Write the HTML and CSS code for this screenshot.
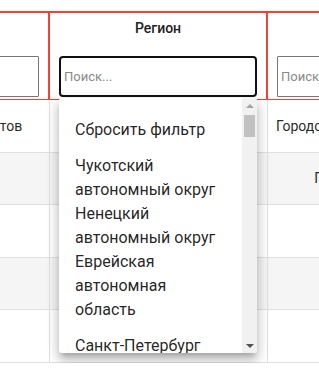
FILE: index.html
```html
<!DOCTYPE html>
<html lang="ru">
 <head>
    <meta charset="utf-8">
    <title>Регионы</title>
    <link rel="stylesheet" href="styles.css">
 </head>
 <body>
    <table class="grid">
        <thead>
            <tr>
                <th class="col-left">
                    <div class="head-title">Код</div>
                    <input class="search" type="text" placeholder="Поиск...">
                </th>
                <th class="col-mid">
                    <div class="head-title">Регион</div>
                    <div class="search-wrap">
                        <input class="search search-active" type="text" placeholder="Поиск...">

                        <!-- выпадающий список -->
                        <div class="menu">
                            <ul class="menu-list">
                                <li class="menu-item">Сбросить фильтр</li>
                                <li class="menu-item">Чукотский автономный округ</li>
                                <li class="menu-item">Ненецкий автономный округ</li>
                                <li class="menu-item">Еврейская автономная область</li>
                                <li class="menu-item">Санкт-Петербург</li>
                            </ul>
                            <div class="scrollbar">
                                <div class="sb-btn"><span class="arrow-up"></span></div>
                                <div class="sb-thumb"></div>
                                <div class="sb-track"></div>
                                <div class="sb-btn"><span class="arrow-down"></span></div>
                            </div>
                        </div>
                    </div>
                </th>
                <th class="col-right">
                    <div class="head-title">Тип</div>
                    <input class="search" type="text" placeholder="Поиск...">
                </th>
            </tr>
        </thead>
        <tbody>
            <tr>
                <td>Число объектов</td>
                <td></td>
                <td>Городской округ с внутригородским делением</td>
            </tr>
            <tr>
                <td>12</td>
                <td></td>
                <td>Город федерального значения РФ</td>
            </tr>
            <tr>
                <td>7</td>
                <td></td>
                <td></td>
            </tr>
            <tr>
                <td>3</td>
                <td></td>
                <td></td>
            </tr>
            <tr>
                <td>5</td>
                <td></td>
                <td></td>
            </tr>
        </tbody>
    </table>
 </body>
</html>
```

FILE: styles.css
```css
html, body {
    margin: 0;
    padding: 0;
    overflow: hidden;
    background: white;
}

body {
    font-family: Roboto, "Noto Sans", sans-serif;
    color: rgba(0, 0, 0, 0.87);
}

.grid {
    table-layout: fixed;
    border-collapse: separate;
    border-spacing: 0;
    width: 687px;
    margin-top: 11px;
    margin-left: -101px;
}

.col-left {
    width: 151px;
}

.col-mid {
    width: 218px;
}

.col-right {
    width: 318px;
}

/* шапка */

.grid th {
    box-sizing: border-box;
    vertical-align: top;
    padding: 5px 9px 2px 9px;
    border-top: 2px solid #f44336;
    border-right: 2px solid #f44336;
    border-bottom: 1px solid #f44336;
    font-weight: normal;
}

.head-title {
    height: 20px;
    line-height: 20px;
    margin-bottom: 18px;
    font-size: 14px;
    font-weight: 500;
    text-align: center;
    color: #212121;
}

.search {
    display: block;
    box-sizing: border-box;
    width: 100%;
    height: 41px;
    margin: 0;
    padding: 0 3px;
    border: 1px solid #767676;
    border-radius: 1px;
    font-family: Roboto, sans-serif;
    font-size: 13px;
    color: #212121;
    background: white;
    outline: none;
}

.search::placeholder {
    color: #8a8a8a;
}

.search-active {
    border: 2px solid #111;
    border-radius: 4px;
    padding: 0 3px;
}

.search-wrap {
    position: relative;
}

/* строки таблицы */

.grid tbody tr {
    height: 52.5px;
}

.grid td {
    box-sizing: border-box;
    padding: 0 8px;
    border-right: 1px solid #e0e0e0;
    border-bottom: 1px solid #e0e0e0;
    font-size: 14px;
    text-align: center;
    white-space: nowrap;
    overflow: hidden;
}

.grid td:first-child {
    padding-right: 18px;
}

.grid tbody tr:nth-child(even) td {
    background: #f5f5f5;
}

/* выпадающий список */

.menu {
    position: absolute;
    top: calc(100% + 1px);
    left: 0;
    right: 0;
    z-index: 10;
    height: 255px;
    display: flex;
    background: white;
    border-radius: 3px;
    overflow: hidden;
    box-shadow: 0 5px 5px -3px rgba(0, 0, 0, 0.2),
                0 8px 10px 1px rgba(0, 0, 0, 0.14),
                0 3px 14px 2px rgba(0, 0, 0, 0.12);
    text-align: left;
}

.menu-list {
    flex: 1;
    margin: 0;
    padding: 8px 0 0 0;
    list-style-type: none;
    overflow: hidden;
}

.menu-item {
    box-sizing: border-box;
    min-height: 48px;
    display: flex;
    align-items: center;
    padding: 0 16px;
    font-size: 16px;
    line-height: 24px;
    color: rgba(0, 0, 0, 0.87);
}

.scrollbar {
    width: 15px;
    display: flex;
    flex-direction: column;
    background: #f1f1f1;
}

.sb-btn {
    height: 15px;
    display: flex;
    align-items: center;
    justify-content: center;
}

.arrow-up {
    width: 0;
    height: 0;
    border-left: 4px solid transparent;
    border-right: 4px solid transparent;
    border-bottom: 4px solid #a3a3a3;
}

.arrow-down {
    width: 0;
    height: 0;
    border-left: 4px solid transparent;
    border-right: 4px solid transparent;
    border-top: 4px solid #505050;
}

.sb-thumb {
    height: 22px;
    margin: 2px 2px 0 2px;
    background: #c1c1c1;
}

.sb-track {
    flex: 1;
}
```
